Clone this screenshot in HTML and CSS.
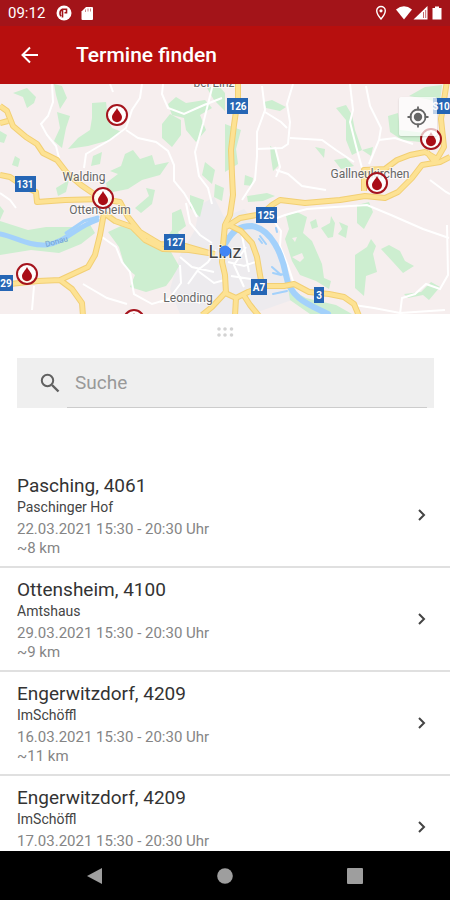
FILE: index.html
```html
<!DOCTYPE html>
<html lang="de">
<head>
    <meta charset="UTF-8">
    <meta name="viewport" content="width=device-width, initial-scale=1.0">
    <title>Termine finden</title>
    <link rel="stylesheet" href="styles.css">
</head>
<body>

    <!-- Status bar -->
    <div class="status-bar">
        <span class="clock">09:12</span>
        <svg class="status-left" width="40" height="16" viewBox="0 0 40 16">
            <circle cx="9" cy="8" r="7.500" fill="#fff"/>
            <path d="M7.500 3.500v9M7.500 4.300q-2.500 1-2.500 4 0 2 1 3M8 4.300h3.500v3.500H9.500" fill="none" stroke="#a31419" stroke-width="1.600"/>
            <path d="M31 2h6q1 0 1 1v11q0 1-1 1H27.500q-1 0-1-1V6.500z" fill="#fff"/>
            <path d="M30.500 4.500v2.500M33 3.500v3M35.500 3.500v3" stroke="#c98a8c"/>
        </svg>
        <svg class="status-right" width="70" height="16" viewBox="0 0 70 16">
            <path d="M11 1.500a4.300 4.300 0 0 0-4.300 4.300C6.700 9 11 14 11 14s4.300-5 4.300-8.200A4.300 4.300 0 0 0 11 1.500z" fill="none" stroke="#fff" stroke-width="1.400"/>
            <circle cx="11" cy="5.800" r="1.600" fill="#fff"/>
            <path d="M26 4.500Q34-2 42 4.500L34 14.500z" fill="#fff"/>
            <path d="M43.500 14.500L57.500 1v13.500z" fill="#fff"/>
            <path d="M53.500 7v6M55.700 5v8" stroke="#c4686b"/>
            <path d="M63.500 3h2.500V1.500h4V3h2.500v11.500h-9z" fill="#fff" transform="translate(-1 0)"/>
        </svg>
    </div>

    <!-- Toolbar -->
    <header class="toolbar">
        <button class="back-button" type="button" aria-label="Zurück">
            <svg width="24" height="24" viewBox="0 0 24 24">
                <path d="M20 12H5M12 4.500L4.500 12l7.500 7.500" fill="none" stroke="#fff" stroke-width="2"/>
            </svg>
        </button>
        <h1>Termine finden</h1>
    </header>

    <!-- Map -->
    <div class="map">
        <svg class="map-canvas" viewBox="0 84 450 230" preserveAspectRatio="xMidYMid slice">
            <defs>
                <g id="pin">
                    <circle r="10" fill="#fff" fill-opacity="0.85" stroke="#a5141d" stroke-width="2"/>
                    <path d="M0-7C2-3 5-1 5 2.300A5 5 0 0 1-5 2.300C-5-1-2-3 0-7z" fill="#a90d16"/>
                </g>
                <g id="roads" fill="none" stroke-linejoin="round">
                    <path d="M0 106l7 5 6 15 13 11 11 7 6 9 14 7 10 13 14 12 16 11 7 4M0 123l8-2"/>
                    <path d="M0 175l10 2 12 8 14 7 1 10 28-2 39-1"/>
                    <path d="M104 213l11 8 17 6 13 13 18 9 26 1 26 4M108 200l12 2 8 15 12 15 20 12 25 2 24 7"/>
                    <path d="M104 213l-4 22-5 20-7 12-28 13-22 1-28 3-10 1M60 280l12 9 10 14 1 13"/>
                    <path d="M238 84v14l-4 27-3 25 1 25 1 20-3 20-5 10-2 20-1 17 3 13 1 18"/>
                    <path d="M226 227l14-9 22-4 10-9 8-5 25 3 35-3 25-4 20 2 13-6 14-14 10-13 18-3 10-5"/>
                    <path d="M364 191v-21l21-1 12-9 13-5 15-3 12 7 7-12-3-28 6-38M427 152l9 12"/>
                    <path d="M229 225l12 6 11 12 5 14 3 18 2 11 22 0 10-2 15 8 20 2 15 3 10 7 5 12"/>
                    <path d="M262 287l-14 5-12 6-13-6M236 298l-1 18M243 294l7 11 9 11M202 315l10-8 13-14"/>
                </g>
            </defs>
            <rect y="84" width="450" height="230" fill="#f6eeee"/>

            <!-- Built-up area -->
            <path d="M180 255l15-25 5-25 14-8 10 20 20-8 14 16 18 25 14 30 2 20-40 14h-72l-10-25z" fill="#edebee"/>

            <!-- Woods -->
            <g fill="#cdeed0">
                <path d="M13 93l14-5 9 9-2 6-7 5-4-11zM54 84l8 2 5 12-7 11-4-14zM57 112l13 4-4 12-4 20-8-7 6-13z"/>
                <path d="M92 103l14-1 2 18 4 8 10 4-12 8-22 6-20 3 10-11 12-8 2-12zM0 131l7 4-3 8-4-1zM15 156l5 3-2 8-6-2z"/>
                <path d="M110 171l11-5 4-12 8-4 7 9 12-4 3 10 14-3-9 13-18 5-14 9-20 4-2-10 12-9zM93 156l9-4-2 12-9 2z"/>
                <path d="M162 124l8-10 11 6v15l-9 12-10-9zM168 104l8-7 10 6 19-3 7 8-12 7 6 15-10 12-10-12-2-12-12-3z"/>
                <path d="M207 88l11-3 7 8v18l-11-11zM205 162l10 8-3 14-10-9zM215 184l9 4-2 13-8-4z"/>
                <path d="M225 124l16 6-5 19 2 15-13 8zM264 102l8-2 14 7-6 4-14-3zM245 175l8 3-1 8-8-1zM247 196l20-3 8 3-12 5-15 1z"/>
                <path d="M336 108l10-3 6 10 3 15 7 20-10 5-6-15v-20zM388 116l10-3 2 17 25 3-5 9-18-2-12-8zM409 96l16-9 17-2-2 18-14-4z"/>
                <path d="M315 147l10 2-1 9zM334 160l12-2 8 8-13 3zM362 150l11-3-2 9zM270 146l5 3 4 16-6 6-2-13z"/>
                <path d="M135 208l14-12-3-8 9 2-3 14-11 9zM56 188l13-8-3 12-8 4zM0 206l4 5-4 9z"/>
                <path d="M0 221l28 9 18-3 28 0 15-4 6 10-14 11-22 9-28-3-31 5z"/>
                <path d="M108 232l13-6 19 6 9 12 22 8 8 14-7 12-6 8-20 6-16-5 5-12-10-8-6-20z"/>
                <path d="M172 213l9-4 5 17-8 6 5 10-8 3-8-8 5-7zM190 195l14 5-4 17-10-9z"/>
                <path d="M286 216l11-4 10 5-4 16 9 8 10 23 2 14 7 3-2 8-13-8-16-6-8-14-7-22 4-10z"/>
                <path d="M310 222l6-3 2 8-6 2zM321 228l9-5 1-7 4 7-2 14-5 1zM339 222l9 4-2 12-8-4 4-5z"/>
                <path d="M357 205l12-3 4 10-9 17-7-6zM355 255l12-8 4-8 5 7-3 8 4 18-11 4-2 20-9-8z"/>
                <path d="M381 249l8-4 11 6 5 10 9 5-11 7-10-11zM404 294l17-2 10-10 9 5-11 13-6-5-15 3z"/>
                <path d="M288 288l18 10 30 7 16 9h-42l-20-14z"/>
            </g>
            <path d="M292 257l10-4 2 5-4 4zM292 238l5-1-2 5z" fill="#f6eeee"/>

            <!-- Minor roads -->
            <g fill="none" stroke="#fff" stroke-width="2">
                <path d="M52 84l1 18-5 14-7 8 6 11 9 11 3 12M110 84l3 8M142 84l-2 14-8 12-6 18-16 12-14 8-10 6-2 14"/>
                <path d="M126 130l12 8 18 4 12 9 6 14v16l10 12 7 12 6 12M163 84l-1 10 6 14 16 6 20-9 18-7M213 84l-4 16-6 24-8 28 4 24 9 12 4 16"/>
                <path d="M262 86l3 24-8 22v24l-2 24-13 20M265 112l16 10 6 6M293 84l-6 20 3 18-2 22-6 4-26 1M290 138l32 2 14 10 18 12"/>
                <path d="M275 147l5 20-4 10M276 170l12 4 14 12 24 4M350 84l3 26-3 12 6 24 6 22M366 86l4 20 11 22-2 12-10 24M379 140l16-2 18 6"/>
                <path d="M272 220l13-5 22-6 28-2 32-2 24 10 32 14 26 9M430 180l16 12 4 2M447 225l1 50-8 14-14-5-11 10-13 4-2 16M354 305l20 3 26 5 45-3"/>
                <path d="M0 193l10 7 6 8M102 237l14 10 6 15 8 10 4 22 18 10 17-5 12-16-1-18M83 284l24 14 20 6M34 286l-2 24M160 302l26-6 14 7"/>
                <path d="M186 203l4 20 10 12 12 8M180 257l12 10 22 5M188 284l10-14 10-8 8-12M198 271l16 12 14-4M246 247l-12 18 10 22M228 262l16 4 14-5M231 276l20 3M241 230l8 42M273 220l8 11-1 15 8 20 6 18"/>
            </g>

            <!-- River -->
            <g fill="none" stroke="#a3d1fb" stroke-linecap="round">
                <path d="M0 234c16 3 28 12 46 11 20-3 30-18 51-25" stroke-width="5"/>
                <path d="M66 233l18-12 14-4" stroke-width="3"/>
                <path d="M225 244c8-14 14-18 27-18 20 4 30 28 34 49 4 24 24 30 42 39" stroke-width="6"/>
                <path d="M260 236l6 8M262 243l-3-4M272 267l8 7 6 1M273 273l8 2M273 294l14-3M276 228l1 4" stroke-width="2"/>
            </g>
            <text class="map-river" x="46" y="247" transform="rotate(-15 46 247)">Donau</text>

            <!-- Main roads, casing first -->
            <use href="#roads" class="road-casing"/>
            <use href="#roads" class="road-fill"/>

            <!-- Road numbers -->
            <g fill="#2666b5">
                <rect x="227" y="98" width="21" height="16"/>
                <rect x="15" y="176" width="21" height="16"/>
                <rect x="256" y="207" width="21" height="16"/>
                <rect x="164" y="234" width="21" height="16"/>
                <rect x="-8" y="275" width="21" height="16"/>
                <rect x="251" y="279" width="16" height="16"/>
                <rect x="314" y="287" width="10" height="16"/>
                <rect x="433" y="98" width="21" height="16"/>
            </g>
            <g class="road-number">
                <text x="238" y="110">126</text>
                <text x="25" y="188">131</text>
                <text x="266" y="219">125</text>
                <text x="175" y="246">127</text>
                <text x="6" y="287">29</text>
                <text x="259" y="291">A7</text>
                <text x="319" y="299">3</text>
                <text x="441" y="110">S10</text>
            </g>

            <!-- Places -->
            <g class="place">
                <text x="214" y="87">bei Linz</text>
                <text x="84" y="181">Walding</text>
                <text x="100" y="214">Ottensheim</text>
                <text x="370" y="178">Gallneukirchen</text>
                <text x="188" y="302">Leonding</text>
                <text class="city" x="225" y="258">Linz</text>
            </g>

            <circle cx="225" cy="251" r="5.500" fill="#4285f4"/>

            <use href="#pin" x="117" y="115"/>
            <use href="#pin" x="103" y="198"/>
            <use href="#pin" x="27" y="274"/>
            <use href="#pin" x="377" y="183"/>
            <use href="#pin" x="431" y="139"/>
            <use href="#pin" x="134" y="320"/>
        </svg>

        <button class="locate-button" type="button" aria-label="Mein Standort">
            <svg width="24" height="24" viewBox="0 0 24 24">
                <circle cx="12" cy="12" r="7.500" fill="none" stroke="#666" stroke-width="1.800"/>
                <circle cx="12" cy="12" r="4.200" fill="#666"/>
                <path d="M12 1.500v4M12 18.500v4M1.500 12h4M18.500 12h4" stroke="#666" stroke-width="1.800"/>
            </svg>
        </button>
    </div>

    <!-- Bottom sheet -->
    <main class="sheet">
        <div class="handle">
            <svg width="18" height="12" viewBox="0 0 18 12" fill="#d3d3d3">
                <circle cx="3" cy="3" r="1.800"/>
                <circle cx="9" cy="3" r="1.800"/>
                <circle cx="15.500" cy="3" r="1.800"/>
                <circle cx="3" cy="9" r="1.800"/>
                <circle cx="9" cy="9" r="1.800"/>
                <circle cx="15.500" cy="9" r="1.800"/>
            </svg>
        </div>

        <div class="search">
            <label for="search" aria-label="Suche">
                <svg width="24" height="24" viewBox="0 0 24 24">
                    <circle cx="9.500" cy="9.500" r="5.700" fill="none" stroke="#616161" stroke-width="2"/>
                    <path d="M14 14l6.500 6.500" stroke="#616161" stroke-width="2.400"/>
                </svg>
            </label>
            <input id="search" class="search-input" type="text" placeholder="Suche">
        </div>

        <div class="list">
            <a class="item" href="#">
                <div class="item-text">
                    <h2>Pasching, 4061</h2>
                    <p class="location">Paschinger Hof</p>
                    <p>22.03.2021 15:30 - 20:30 Uhr</p>
                    <p>~8 km</p>
                </div>
                <svg class="chevron" width="24" height="24" viewBox="0 0 24 24"><path d="M9 7l5 5-5 5"/></svg>
            </a>
            <a class="item" href="#">
                <div class="item-text">
                    <h2>Ottensheim, 4100</h2>
                    <p class="location">Amtshaus</p>
                    <p>29.03.2021 15:30 - 20:30 Uhr</p>
                    <p>~9 km</p>
                </div>
                <svg class="chevron" width="24" height="24" viewBox="0 0 24 24"><path d="M9 7l5 5-5 5"/></svg>
            </a>
            <a class="item" href="#">
                <div class="item-text">
                    <h2>Engerwitzdorf, 4209</h2>
                    <p class="location">ImSchöffl</p>
                    <p>16.03.2021 15:30 - 20:30 Uhr</p>
                    <p>~11 km</p>
                </div>
                <svg class="chevron" width="24" height="24" viewBox="0 0 24 24"><path d="M9 7l5 5-5 5"/></svg>
            </a>
            <a class="item" href="#">
                <div class="item-text">
                    <h2>Engerwitzdorf, 4209</h2>
                    <p class="location">ImSchöffl</p>
                    <p>17.03.2021 15:30 - 20:30 Uhr</p>
                </div>
                <svg class="chevron" width="24" height="24" viewBox="0 0 24 24"><path d="M9 7l5 5-5 5"/></svg>
            </a>
        </div>
    </main>

    <!-- System navigation -->
    <nav class="nav-bar">
        <button type="button" aria-label="Zurück">
            <svg width="20" height="20" viewBox="0 0 20 20"><path d="M2 10L17 2v16z"/></svg>
        </button>
        <button type="button" aria-label="Startseite">
            <svg width="20" height="20" viewBox="0 0 20 20"><circle cx="10" cy="10" r="7.800"/></svg>
        </button>
        <button type="button" aria-label="Übersicht">
            <svg width="20" height="20" viewBox="0 0 20 20"><rect x="2" y="2" width="16" height="16" rx="1"/></svg>
        </button>
    </nav>

</body>
</html>
```
FILE: styles.css
```css
* {
    box-sizing: border-box;
}

body {
    margin: 0;
    height: 100vh;
    display: flex;
    flex-direction: column;
    overflow: hidden;
    background-color: #ffffff;
    font-family: Roboto, "Liberation Sans", sans-serif;
    color: #333333;
}

button {
    display: flex;
    align-items: center;
    justify-content: center;
    padding: 0;
    border: none;
    background: none;
    cursor: pointer;
}

/* Status bar */
.status-bar {
    flex: none;
    display: flex;
    align-items: center;
    height: 26px;
    padding: 0 10px 0 8px;
    background-color: #a31419;
    color: #ffffff;
}

.clock {
    font-size: 15px;
}

.status-left {
    margin-left: 10px;
}

.status-right {
    margin-left: auto;
    overflow: visible;
}

/* Toolbar */
.toolbar {
    flex: none;
    display: flex;
    align-items: center;
    gap: 34px;
    height: 58px;
    padding: 0 18px;
    background-color: #b70f0e;
    color: #ffffff;
}

.toolbar h1 {
    margin: 0;
    font-size: 21px;
    font-weight: 500;
}

/* Map */
.map {
    flex: none;
    position: relative;
    height: 230px;
}

.map-canvas {
    display: block;
    width: 100%;
    height: 100%;
}

.road-casing {
    stroke: #f2cf74;
    stroke-width: 6px;
}

.road-fill {
    stroke: #fde293;
    stroke-width: 4px;
}

.place {
    font-size: 12px;
    fill: #666666;
    text-anchor: middle;
    stroke: #ffffff;
    stroke-width: 2px;
    stroke-opacity: 0.7;
    paint-order: stroke;
}

.city {
    font-size: 18px;
    fill: #444444;
}

.road-number {
    font-size: 10px;
    font-weight: bold;
    fill: #ffffff;
    text-anchor: middle;
}

.map-river {
    font-size: 8px;
    fill: #6f9fce;
}

.locate-button {
    position: absolute;
    top: 13px;
    right: 13px;
    width: 38px;
    height: 39px;
    background-color: rgba(255, 255, 255, 0.7);
    border-radius: 2px;
    box-shadow: 0 1px 2px rgba(0, 0, 0, 0.15);
}

/* Bottom sheet */
.sheet {
    flex: 1;
    min-height: 0;
    display: flex;
    flex-direction: column;
    overflow: hidden;
}

.handle {
    display: flex;
    justify-content: center;
    padding: 12px 0 20px;
}

.search {
    flex: none;
    display: flex;
    align-items: center;
    height: 50px;
    margin: 0 16px 56px 17px;
    padding: 0 7px 0 21px;
    background-color: #efefef;
}

.search label {
    display: flex;
    width: 29px;
}

.search-input {
    flex: 1;
    min-width: 0;
    height: 50px;
    padding: 0 8px;
    border: none;
    border-bottom: 1px solid #cccccc;
    outline: none;
    background: none;
    font-family: inherit;
    font-size: 19px;
    color: #333333;
}

.search-input::placeholder {
    color: #999999;
}

/* Appointments */
.item {
    display: flex;
    align-items: center;
    justify-content: space-between;
    height: 104px;
    padding: 0 16px 0 17px;
    border-bottom: 2px solid #e0e0e0;
    color: inherit;
    text-decoration: none;
}

.item-text {
    align-self: flex-start;
    padding-top: 10px;
}

.item h2 {
    margin: 0;
    font-size: 19px;
    font-weight: 400;
    line-height: 24px;
}

.item p {
    margin: 0;
    font-size: 15px;
    line-height: 19px;
    color: #858585;
}

.item .location {
    margin-bottom: 3px;
    font-size: 14px;
    color: #444444;
}

.chevron {
    fill: none;
    stroke: #444444;
    stroke-width: 2;
}

/* System navigation */
.nav-bar {
    flex: none;
    display: flex;
    justify-content: center;
    gap: 110px;
    height: 49px;
    background-color: #000000;
}

.nav-bar svg {
    fill: #9e9e9e;
}
```
